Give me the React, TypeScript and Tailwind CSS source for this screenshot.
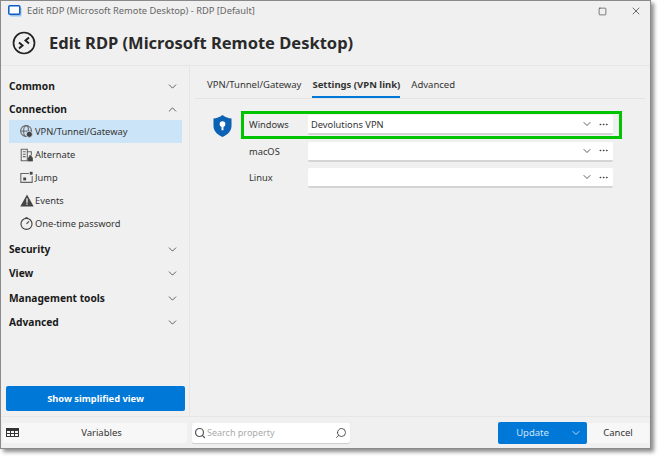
import { ChevronDown, ChevronUp, X, Square, Search, Ellipsis } from "lucide-react";

const font = "font-['Noto_Sans',sans-serif]";

function Group({ label, open, className }: { label: string; open?: boolean; className: string }) {
  const Icon = open ? ChevronUp : ChevronDown;
  return (
    <div className={`flex items-center justify-between pl-[8px] pr-[10px] ${className}`}>
      <span className="text-[10.2px] font-bold text-[#1a1a1a]">{label}</span>
      <Icon size={13} strokeWidth={1.4} className="text-[#333]" />
    </div>
  );
}

function Item({ label, icon, active }: { label: string; icon: React.ReactNode; active?: boolean }) {
  return (
    <div className={`ml-[8px] mr-[7px] flex h-[23px] items-center gap-[1px] pl-[11px] ${active ? "bg-[#cce4f7]" : ""}`}>
      <span className="flex w-[14px] justify-start">{icon}</span>
      <span className="text-[9.3px] text-[#333]">{label}</span>
    </div>
  );
}

function Field({ label, value }: { label: string; value?: string }) {
  return (
    <div className="flex h-[26.500px] items-center">
      <span className="w-[59px] text-[9.3px] text-[#333]">{label}</span>
      <div className="flex h-[20px] w-[305px] items-center justify-between rounded-[2px] border-b-2 border-b-[#d4d4d4] bg-white pl-[3px] pr-[4px]">
        <span className="pt-[1px] text-[9.3px] text-[#333]">{value}</span>
        <span className="flex items-center gap-[5px] text-[#333]">
          <ChevronDown size={12} strokeWidth={1.6} />
          <Ellipsis size={11} strokeWidth={1.6} />
        </span>
      </div>
    </div>
  );
}

const VpnIcon = (
  <svg width="13" height="13" viewBox="0 0 16 16" fill="none" stroke="#666" strokeWidth="1.300">
    <circle cx="7.500" cy="7.500" r="6.700" />
    <ellipse cx="7.500" cy="7.500" rx="3" ry="6.700" />
    <path d="M1 7.500h13" />
    <circle cx="11.500" cy="11.500" r="3.800" fill="#444" stroke="#cce4f7" strokeWidth="1" />
  </svg>
);
const AltIcon = (
  <svg width="13" height="14" viewBox="0 0 16 16" fill="none" stroke="#666" strokeWidth="1.300">
    <path d="M1.500 1h7.500v14h-7.500zM9 4h5v4M3.500 4h3.500M3.500 7h3.500M3.500 10h3.500" />
    <path d="M10 11.500h5.500V15.500H10zM11.300 11.500V10a1.500 1.500 0 0 1 3 0v1.500" fill="#444" stroke="#444" strokeWidth="0.800" />
  </svg>
);
const JumpIcon = (
  <svg width="13" height="13" viewBox="0 0 16 16" fill="none" stroke="#666" strokeWidth="1.300">
    <path d="M11 3H1v11h14V6" />
    <rect x="4" y="8" width="3.500" height="3.500" fill="#444" stroke="none" />
    <rect x="12" y="1" width="3.500" height="3.500" fill="#444" stroke="none" />
  </svg>
);
const WarnIcon = (
  <svg width="14" height="13" viewBox="0 0 16 15">
    <path d="M8 .5 15.700 14.500H.3Z" fill="#444" />
    <path d="M7.300 5h1.400v5H7.300zM7.300 11h1.400v1.500H7.300z" fill="#fff" />
  </svg>
);
const ClockIcon = (
  <svg width="13" height="13" viewBox="0 0 16 16" fill="none" stroke="#444" strokeWidth="1.400">
    <circle cx="8" cy="8.500" r="6.800" />
    <path d="M8 8.500 11 5.500M6.500 1h3" />
  </svg>
);

export default function App() {
  return (
    <div className={`h-[459px] w-[661px] overflow-hidden bg-white ${font}`}>
      <div className="flex h-[449px] w-[651px] flex-col border border-[#8a8a8a] bg-[#f0f0f0] shadow-[3px_3px_4px_rgba(0,0,0,0.45)]">
        <div className="flex h-[20px] shrink-0 items-center pl-[7px]">
          <svg width="14" height="12" viewBox="0 0 14 12" fill="none">
            <rect x="2" y="2.500" width="11.500" height="9" rx="1" fill="#9cc3ea" />
            <rect x="0.800" y="0.800" width="11" height="8.500" rx="1" fill="#fff" stroke="#0b5cc4" strokeWidth="1.500" />
          </svg>
          <span className="ml-[5px] text-[9.3px] text-[#666]">Edit RDP (Microsoft Remote Desktop) - RDP [Default]</span>
          <span className="ml-auto flex items-center gap-[23px] pr-[8px] text-[#333]">
            <Square size={9} strokeWidth={1.6} />
            <X size={12} strokeWidth={1.4} />
          </span>
        </div>
        <div className="flex h-[45px] shrink-0 items-center border-b border-[#e6e6e6] pl-[11px]">
          <svg width="24" height="24" viewBox="0 0 24 24" fill="none">
            <circle cx="12" cy="12" r="10.500" stroke="#222" strokeWidth="1.700" />
            <path d="M7 11.500 10.500 14.500 7 17.500" stroke="#222" strokeWidth="2" />
            <path d="M17 6.500 13.500 9.500 17 12.500" stroke="#222" strokeWidth="2" />
          </svg>
          <span className="ml-[13px] pt-[1px] text-[16.5px] font-bold text-[#2a2a2a]">Edit RDP (Microsoft Remote Desktop)</span>
        </div>
        <div className="flex min-h-0 flex-1">
          <div className="flex w-[189px] shrink-0 flex-col border-r border-[#e6e6e6] pt-[7.500px]">
            <Group label="Common" className="h-[25.500px]" />
            <Group label="Connection" open className="h-[21px]" />
            <Item label="VPN/Tunnel/Gateway" icon={VpnIcon} active />
            <Item label="Alternate" icon={AltIcon} />
            <Item label="Jump" icon={JumpIcon} />
            <Item label="Events" icon={WarnIcon} />
            <Item label="One-time password" icon={ClockIcon} />
            <Group label="Security" className="mt-[2px] h-[24.500px]" />
            <Group label="View" className="h-[24.500px]" />
            <Group label="Management tools" className="h-[24.500px]" />
            <Group label="Advanced" className="h-[24.500px]" />
            <div className="mt-auto mb-[5px] ml-[5px] flex h-[25px] w-[179px] items-center justify-center rounded-[2px] bg-[#0078d7] text-[9.3px] font-bold text-white">
              Show simplified view
            </div>
          </div>
          <div className="flex min-w-0 flex-1 flex-col">
            <div className="mx-[5px] flex h-[33px] shrink-0 items-end gap-[11px] border-b border-[#e4e4e4] pl-[12px] text-[9.5px] text-[#333]">
              <span className="pb-[6px]">VPN/Tunnel/Gateway</span>
              <span className="border-b-2 border-[#0078d7] pb-[4px] font-bold">Settings (VPN link)</span>
              <span className="pb-[6px]">Advanced</span>
            </div>
            <div className="flex pl-[23px] pt-[13px]">
              <svg className="mt-[3px] shrink-0" width="19" height="22" viewBox="0 0 20 23">
                <path d="M10 0C7 2.500 3.500 3.500 0.500 3.500V11C0.500 16.500 4 20.500 10 23C16 20.500 19.500 16.500 19.500 11V3.500C16.500 3.500 13 2.500 10 0Z" fill="#0b62b5" />
                <circle cx="10" cy="9.500" r="3" fill="#fff" />
                <rect x="9" y="10" width="2" height="6" fill="#fff" />
              </svg>
              <div className="relative ml-[17px] flex flex-col">
                <div className="pointer-events-none absolute -top-[1.500px] -left-[8px] h-[28px] w-[381px] border-[3px] border-[#00c400]" />
                <Field label="Windows" value="Devolutions VPN" />
                <Field label="macOS" />
                <Field label="Linux" />
              </div>
            </div>
          </div>
        </div>
        <div className="flex h-[32px] shrink-0 items-center border-t border-[#e6e6e6] pl-[2px] pr-[1px]">
          <div className="flex h-[20px] w-[184px] items-center rounded-[2px] bg-[#f7f7f7] pl-[3px] text-[9.5px] text-[#333]">
            <svg width="13" height="9" viewBox="0 0 13 9" fill="#333">
              <path d="M0 0h13v9H0zM1 3v2h3V3zm4 0v2h3V3zm4 0v2h3V3zM1 6v2h3V6zm4 0v2h3V6zm4 0v2h3V6z" fillRule="evenodd" />
            </svg>
            <span className="flex-1 pr-[3px] pt-[2px] text-center">Variables</span>
          </div>
          <div className="ml-[5px] flex h-[20px] w-[158px] items-center rounded-[2px] bg-white pl-[2px] pr-[3px] text-[9px] text-[#aaa] shadow-[0_1px_1px_rgba(0,0,0,0.15)]">
            <Search size={12} strokeWidth={2.4} className="text-[#555]" />
            <span className="ml-[1px] flex-1">Search property</span>
            <Search size={12} strokeWidth={1.6} className="scale-x-[-1] text-[#333]" />
          </div>
          <div className="ml-auto flex h-[22px] w-[89px] items-center rounded-[2px] bg-[#0078d7] text-[9.5px] text-[#cfe4f7]">
            <span className="flex-1 pr-[3px] pt-[1px] text-center">Update</span>
            <ChevronDown size={12} strokeWidth={1.8} className="mr-[5px]" />
          </div>
          <div className="flex h-[20px] w-[62px] items-center justify-center rounded-[2px] bg-[#f7f7f7] pt-[2px] text-[9.5px] text-[#333]">Cancel</div>
        </div>
      </div>
    </div>
  );
}
